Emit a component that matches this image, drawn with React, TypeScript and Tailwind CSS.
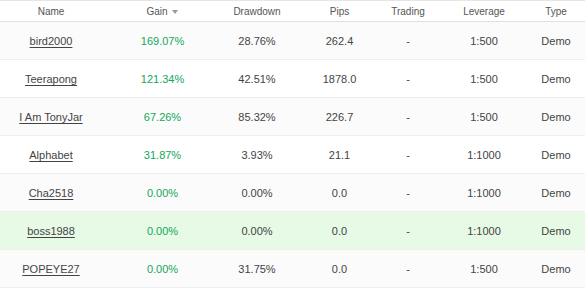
import React from 'react';

interface Row {
  name: string;
  gain: string;
  drawdown: string;
  pips: string;
  trading: string;
  leverage: string;
  type: string;
  highlight?: boolean;
}

const rows: Row[] = [
  { name: 'bird2000', gain: '169.07%', drawdown: '28.76%', pips: '262.4', trading: '-', leverage: '1:500', type: 'Demo' },
  { name: 'Teerapong', gain: '121.34%', drawdown: '42.51%', pips: '1878.0', trading: '-', leverage: '1:500', type: 'Demo' },
  { name: 'I Am TonyJar', gain: '67.26%', drawdown: '85.32%', pips: '226.7', trading: '-', leverage: '1:500', type: 'Demo' },
  { name: 'Alphabet', gain: '31.87%', drawdown: '3.93%', pips: '21.1', trading: '-', leverage: '1:1000', type: 'Demo' },
  { name: 'Cha2518', gain: '0.00%', drawdown: '0.00%', pips: '0.0', trading: '-', leverage: '1:1000', type: 'Demo' },
  { name: 'boss1988', gain: '0.00%', drawdown: '0.00%', pips: '0.0', trading: '-', leverage: '1:1000', type: 'Demo', highlight: true },
  { name: 'POPEYE27', gain: '0.00%', drawdown: '31.75%', pips: '0.0', trading: '-', leverage: '1:500', type: 'Demo' },
];

// column widths + small offsets so the centred text lands where the original table put it
const grid = 'grid grid-cols-[107px_103px_88px_76px_72px_74px_65px] items-center';

export default function App() {
  return (
    <div
      className="w-[585px] bg-white text-[#444]"
      style={{ fontFamily: '"Liberation Sans", Arial, sans-serif' }}
    >
      <div className={`${grid} h-[22px] border-t border-b border-t-[#e6e6e6] border-b-[#e0e0e0] text-[10px] text-[#555] pt-[1px]`}>
        <div className="text-center pr-[5px]">Name</div>
        <div className="flex items-center justify-center pl-[7px]">
          Gain
          <span className="ml-[4px] mt-[1px] w-0 h-0 border-l-[3px] border-r-[3px] border-t-[4px] border-l-transparent border-r-transparent border-t-[#999]" />
        </div>
        <div className="text-center pl-[6px]">Drawdown</div>
        <div className="text-center pl-[7px]">Pips</div>
        <div className="text-center pr-[4px]">Trading</div>
        <div className="text-center pl-[2px]">Leverage</div>
        <div className="text-center pl-[7px]">Type</div>
      </div>
      {rows.map((r, i) => (
        <div
          key={r.name}
          className={`${grid} h-[38px] border-b border-[#eeeeee] text-[11px] pt-[2px] ${
            r.highlight ? 'bg-[#e6fae6]' : i % 2 === 0 ? 'bg-[#fbfbfb]' : 'bg-white'
          }`}
        >
          <div className="text-center pr-[5px]">
            <a href="#" className="underline underline-offset-[2px] text-[#444]">{r.name}</a>
          </div>
          <div className="text-center pl-[8px] text-[#14a75a]">{r.gain}</div>
          <div className="text-center pl-[6px]">{r.drawdown}</div>
          <div className="text-center pl-[7px]">{r.pips}</div>
          <div className="text-center pr-[4px]">{r.trading}</div>
          <div className="text-center pl-[2px]">{r.leverage}</div>
          <div className="text-center pl-[7px]">{r.type}</div>
        </div>
      ))}
    </div>
  );
}
